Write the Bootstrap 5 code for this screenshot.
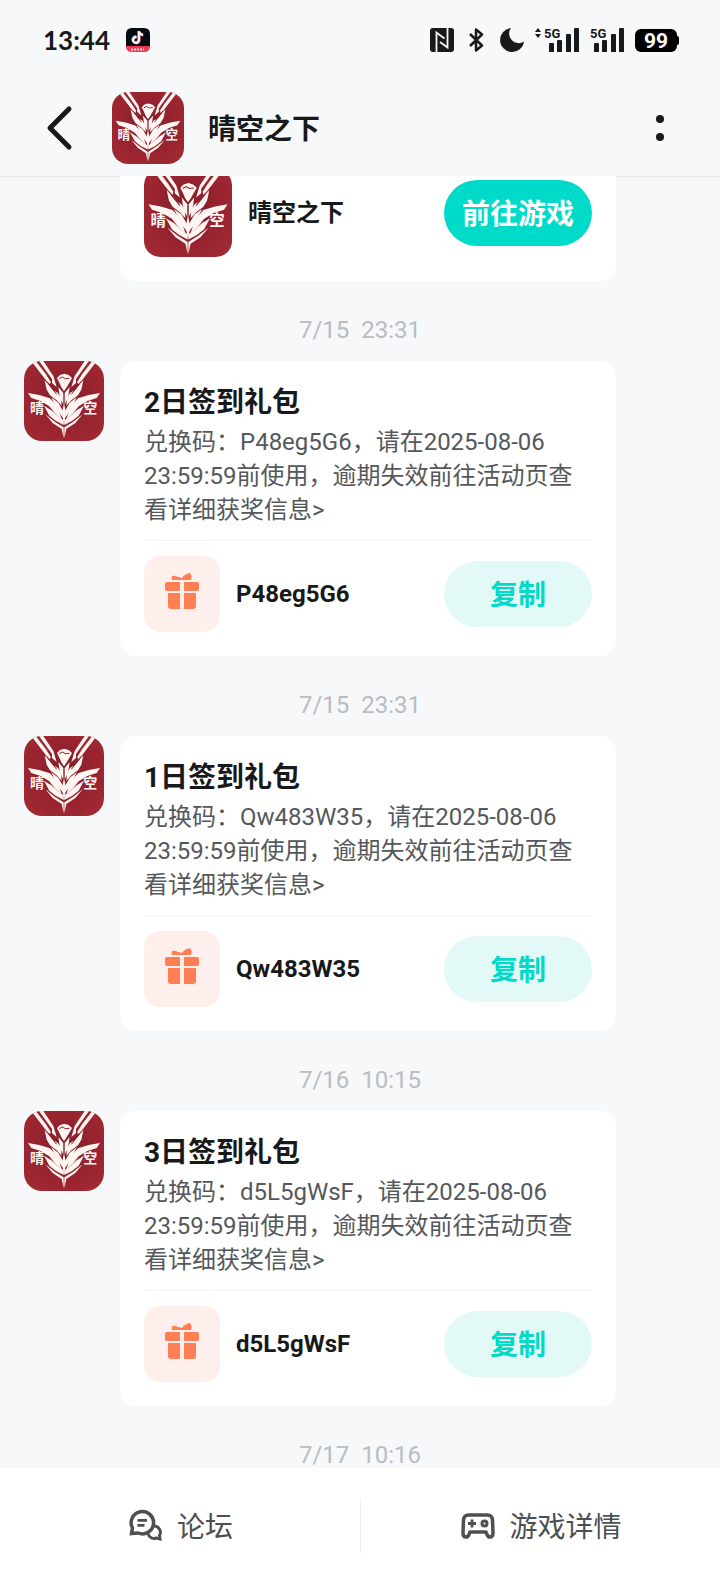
<!DOCTYPE html>
<html lang="zh-CN">
<head>
<meta charset="utf-8">
<meta name="viewport" content="width=device-width, initial-scale=1">
<title>晴空之下</title>
<link href="https://cdn.jsdelivr.net/npm/bootstrap@5.3.0/dist/css/bootstrap.min.css" rel="stylesheet">
<style>
  :root { --ink: #17191a; --page: #f6f8fa; --teal: #00dac8; }
  body { background: var(--page); color: var(--ink); font-family: Roboto, "Noto Sans CJK SC", sans-serif; font-size: 24px; line-height: 34px; }
  svg { display: block; flex: none; }
  .status-bar { height: 80px; padding: 0 41px 0 43px; }
  .clock { font-family: Lato, sans-serif; font-weight: 700; font-size: 26px; }
  .status-icons { gap: 11px; }
  .title-bar { height: 96px; padding: 0 44px 0 40px; }
  .title-bar h1 { font-size: 28px; line-height: 34px; font-weight: 700; margin: 0 0 0 24px; padding-top: 4px; }
  .icon-btn { width: 40px; height: 56px; padding: 0; border: 0; background: none; color: inherit; }
  .avatar-header, .avatar-chat, .avatar-game { overflow: hidden; }
  .avatar-header { width: 72px; height: 72px; margin-left: 32px; border-radius: 16px; }
  .avatar-chat { width: 80px; height: 80px; border-radius: 18px; }
  .avatar-game { width: 88px; height: 88px; border-radius: 16px; }
  .chat { min-height: 0; padding: 0 104px 0 24px; box-shadow: inset 0 1px #e6e8ea; }
  .stamp { margin: 0 -80px 18px 0; padding: 36px 0 0; text-align: center; white-space: pre; line-height: 26px; color: #b9bdc1; }
  .stamp:last-child { margin-bottom: 0; }
  .bubble { background: #fff; border-radius: 16px; padding: 24px; }
  .bubble-alone { margin-left: 96px; }
  .bubble h2 { font-size: 28px; line-height: 36px; font-weight: 700; margin: 0 0 4px; }
  .bubble p { color: #55585b; margin: 0 0 13px; }
  .reward { border-top: 1px solid #f3f4f5; padding-top: 15px; }
  .gift { width: 76px; height: 76px; border-radius: 16px; background: #ffefec; color: #ff7f55; }
  .pill { width: 148px; height: 66px; padding: 4px 0 0; border: 0; border-radius: 33px; font-size: 28px; font-weight: 700; line-height: 34px; }
  .pill-copy { background: #e3f9f8; color: var(--teal); }
  .pill-go { background: var(--teal); color: #fff; }
  .bottom-bar { height: 116px; background: #fff; padding: 30px 0; }
  .bottom-bar a { gap: 14px; font-size: 28px; color: #4d5052; }
  .bottom-bar a + a { border-left: 1px solid #eeeff0; }
  .bottom-bar span { padding-top: 4px; }
</style>
</head>
<body>
<svg width="0" height="0" class="position-absolute" aria-hidden="true">
  <radialGradient id="red" cx="50%" cy="45%" r="75%"><stop offset="0" stop-color="#7f1f2a"/><stop offset=".55" stop-color="#99242f"/><stop offset="1" stop-color="#a32c35"/></radialGradient>
  <g id="half">
    <path d="M24 3 35 0 66 40 80 62 78 70 66 58Z"/>
    <path d="M45 0 58 0 88 45 98 78 84 66 84 54Z"/>
    <path d="M62 58 78 76 88 88 102 96 111 112 113 134 98 118 78 103 68 86Z"/>
    <path d="M103 78 118 96 118 130 108 112Z"/>
    <path d="M82 109 103 125 117 150 118 172 100 148Z"/>
    <path d="M12 96 46 102 78 112 94 130 106 154 114 178 92 156 76 136 50 120 22 111Z"/>
    <path d="M60 134 82 148 104 168 119 178 119 192 96 180 76 164Z"/>
    <path d="M64 160 92 182 119 199 119 232 113 204 86 186Z"/>
  </g>
  <symbol id="crest" viewBox="0 0 240 240">
    <rect width="240" height="240" fill="url(#red)"/>
    <g fill="#fff5f2">
      <use href="#half"/>
      <use href="#half" transform="matrix(-1 0 0 1 240 0)"/>
      <path d="M99 51 108 42 121 38 134 42 144 51 136 65 128 79 120 91 112 79 106 65Z"/>
      <path d="M120 126 126 156 120 192 114 156Z"/>
      <text x="18" y="155" font-size="42" font-weight="700">晴</text>
      <text x="178" y="155" font-size="42" font-weight="700">空</text>
    </g>
    <path d="m106 53 9-5 9 5 12-1M74 70l24 30M166 70l-24 30" fill="none" stroke="#8f202b" stroke-width="3"/>
  </symbol>
  <symbol id="present" viewBox="-2 -2 44 44">
    <g fill="currentColor">
      <path d="M10 6c-1-3 0-5 3-4l7 2c2-3 4-4 8-5 2 2 2 5 1 7Z"/>
      <path d="M5 8H18V17H5a2 2 0 0 1-2-2V10a2 2 0 0 1 2-2ZM22 8H35a2 2 0 0 1 2 2V15a2 2 0 0 1-2 2H22ZM6 19H18V35H9a3 3 0 0 1-3-3ZM22 19H34V32a3 3 0 0 1-3 3H22Z"/>
    </g>
  </symbol>
  <symbol id="bars" viewBox="0 0 30 24">
    <path fill="currentColor" d="M1 15h3q1 0 1 1v8H0v-8q0-1 1-1ZM9 12h3q1 0 1 1v11H8V13q0-1 1-1ZM18 6h3q1 0 1 1v17h-5V7q0-1 1-1ZM26 0h3q1 0 1 1v23h-5V1q0-1 1-1Z"/>
  </symbol>
</svg>

<div class="d-flex flex-column vh-100 overflow-hidden">
  <header class="flex-shrink-0">
    <div class="status-bar d-flex align-items-center justify-content-between">
      <div class="d-flex align-items-center gap-3">
        <span class="clock">13:44</span>
        <svg width="24" height="24" viewBox="0 0 24 24" role="img" aria-label="抖音">
          <path d="M6 0H18Q24 0 24 6V19H0V6Q0 0 6 0Z" fill="#080a12"/>
          <path d="M0 18H24Q24 24 18 24H6Q0 24 0 18Z" fill="#ed3a53"/>
          <path d="M5 21.500h13" stroke="#ffd0d5" stroke-width="2" stroke-dasharray="2 1"/>
          <g fill="none" stroke-width="2.200"><path d="M10 8.500a3 3 0 1 0 2.500 3V3c.5 2 2 3 4 3.300" stroke="#25e4e0"/><path d="M11 9.500a3 3 0 1 0 2.500 3V4c.5 2 2 3 4 3.300" stroke="#fa3c6b"/><path d="M10.500 9a3 3 0 1 0 2.500 3V3.500c.5 2 2 3 4 3.300" stroke="#fff"/></g>
        </svg>
      </div>
      <div class="status-icons d-flex align-items-center">
        <svg width="24" height="24" viewBox="0 0 24 24"><rect width="24" height="24" rx="3" fill="#17191a"/><path d="M6.500 24V4.500L14.500 10.500M17.500 0V19.500L10 14" fill="none" stroke="#f6f8fa" stroke-width="1.800"/></svg>
        <svg width="24" height="24" viewBox="0 0 24 24" fill="none" stroke="currentColor" stroke-width="2.500" stroke-linejoin="round"><path d="M5 6 17 17.500 11 22.500V1.500L17 6.500 5 18"/></svg>
        <svg width="24" height="24" viewBox="0 0 24 24"><path d="M11 0A9.500 9.500 0 0 0 24 13.500 12 12 0 1 1 11 0Z" fill="currentColor"/></svg>
        <svg width="44" height="24" viewBox="0 0 44 24" fill="currentColor"><path d="M0 4 3 0 6 4ZM0 6H6L3 10Z"/><text x="9" y="10" font-size="13" font-weight="700">5G</text><use href="#bars" x="14" width="30" height="24"/></svg>
        <svg width="34" height="24" viewBox="0 0 34 24" fill="currentColor"><text x="0" y="10" font-size="13" font-weight="700">5G</text><use href="#bars" x="4" width="30" height="24"/></svg>
        <svg width="44" height="24" viewBox="0 0 44 24"><rect y="1" width="42" height="23" rx="6"/><rect x="40" y="8" width="4" height="9" rx="2"/><text x="21" y="20" font-size="21" font-weight="700" text-anchor="middle" fill="#fff">99</text></svg>
      </div>
    </div>
    <div class="title-bar d-flex align-items-center">
      <button type="button" class="icon-btn" aria-label="返回"><svg width="40" height="56" viewBox="0 0 40 56" fill="none" stroke="currentColor" stroke-width="5" stroke-linecap="round" stroke-linejoin="round"><path d="M29 9 10 28 29 47"/></svg></button>
      <svg class="avatar-header" viewBox="0 0 240 240"><use href="#crest"/></svg>
      <h1>晴空之下</h1>
      <button type="button" class="icon-btn ms-auto" aria-label="更多"><svg width="40" height="56" viewBox="0 0 40 56" fill="currentColor"><circle cx="24" cy="19" r="4"/><circle cx="24" cy="37" r="4"/></svg></button>
    </div>
  </header>

  <main class="chat flex-grow-1 d-flex flex-column justify-content-end overflow-hidden">
    <section class="bubble bubble-alone d-flex align-items-center gap-3 flex-shrink-0">
      <svg class="avatar-game" viewBox="0 0 240 240"><use href="#crest"/></svg>
      <strong>晴空之下</strong>
      <button type="button" class="pill pill-go ms-auto">前往游戏</button>
    </section>

    <time class="stamp flex-shrink-0">7/15  23:31</time>
    <article class="d-flex align-items-start gap-3 flex-shrink-0">
      <svg class="avatar-chat" viewBox="0 0 240 240"><use href="#crest"/></svg>
      <div class="bubble flex-grow-1">
        <h2>2日签到礼包</h2>
        <p>兑换码：P48eg5G6，请在2025-08-06 23:59:59前使用，逾期失效前往活动页查看详细获奖信息&gt;</p>
        <div class="reward d-flex align-items-center gap-3">
          <span class="gift d-flex align-items-center justify-content-center"><svg width="44" height="44"><use href="#present"/></svg></span>
          <strong>P48eg5G6</strong>
          <button type="button" class="pill pill-copy ms-auto">复制</button>
        </div>
      </div>
    </article>

    <time class="stamp flex-shrink-0">7/15  23:31</time>
    <article class="d-flex align-items-start gap-3 flex-shrink-0">
      <svg class="avatar-chat" viewBox="0 0 240 240"><use href="#crest"/></svg>
      <div class="bubble flex-grow-1">
        <h2>1日签到礼包</h2>
        <p>兑换码：Qw483W35，请在2025-08-06 23:59:59前使用，逾期失效前往活动页查看详细获奖信息&gt;</p>
        <div class="reward d-flex align-items-center gap-3">
          <span class="gift d-flex align-items-center justify-content-center"><svg width="44" height="44"><use href="#present"/></svg></span>
          <strong>Qw483W35</strong>
          <button type="button" class="pill pill-copy ms-auto">复制</button>
        </div>
      </div>
    </article>

    <time class="stamp flex-shrink-0">7/16  10:15</time>
    <article class="d-flex align-items-start gap-3 flex-shrink-0">
      <svg class="avatar-chat" viewBox="0 0 240 240"><use href="#crest"/></svg>
      <div class="bubble flex-grow-1">
        <h2>3日签到礼包</h2>
        <p>兑换码：d5L5gWsF，请在2025-08-06 23:59:59前使用，逾期失效前往活动页查看详细获奖信息&gt;</p>
        <div class="reward d-flex align-items-center gap-3">
          <span class="gift d-flex align-items-center justify-content-center"><svg width="44" height="44"><use href="#present"/></svg></span>
          <strong>d5L5gWsF</strong>
          <button type="button" class="pill pill-copy ms-auto">复制</button>
        </div>
      </div>
    </article>

    <time class="stamp flex-shrink-0">7/17  10:16</time>
  </main>

  <nav class="bottom-bar d-flex flex-shrink-0">
    <a href="#forum" class="w-50 d-flex align-items-center justify-content-center text-decoration-none">
      <svg width="36" height="36" viewBox="0 0 36 36" fill="none" stroke="currentColor" stroke-width="3.500">
        <path d="M5.500 20A11.200 11.200 0 1 1 11 25L4.500 25.500Z"/>
        <path d="M10.500 12.300h9.500M10.500 17.300h7" stroke-width="2.800"/>
        <path d="M27 18A6.300 6.300 0 0 1 32.500 27.500L33 31 29.500 30A6.300 6.300 0 0 1 21 25.500" stroke-width="3"/>
      </svg>
      <span>论坛</span>
    </a>
    <a href="#game" class="w-50 d-flex align-items-center justify-content-center text-decoration-none">
      <svg width="36" height="36" viewBox="0 0 36 36" fill="none" stroke="currentColor" stroke-width="3.500" stroke-linejoin="round">
        <path d="M9.500 7H28.500Q33 7 33.500 12L34 25Q34 29 31 29 29 29 28 26.500L27 24H11L10 26.500Q9 29 7 29 4 29 4 25L4.500 12Q5 7 9.500 7Z"/>
        <path d="M9 15.500h8M13 11.500v8" stroke-width="2.800"/><circle cx="25.500" cy="15.500" r="2.500" stroke-width="3"/>
      </svg>
      <span>游戏详情</span>
    </a>
  </nav>
</div>
<script src="https://cdn.jsdelivr.net/npm/bootstrap@5.3.0/dist/js/bootstrap.bundle.min.js"></script>
</body>
</html>
